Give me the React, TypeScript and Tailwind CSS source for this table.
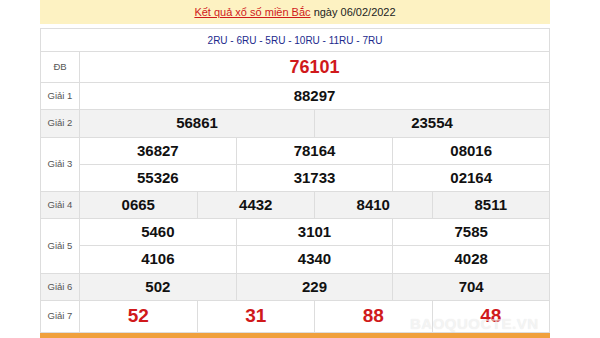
import React from "react";

const B = "border-[#dddddd]";

function Label({ text, gray }: { text: string; gray?: boolean }) {
  return (
    <div
      className={`w-[39px] shrink-0 flex items-center justify-center border-r border-b ${B} text-[9.5px] text-[#555555] ${gray ? "bg-[#f2f2f2]" : "bg-white"}`}
    >
      {text}
    </div>
  );
}

function NumRow({
  nums,
  h,
  gray,
  red,
  big,
}: {
  nums: string[];
  h: string;
  gray?: boolean;
  red?: boolean;
  big?: boolean;
}) {
  const cols =
    nums.length === 1
      ? "grid-cols-1"
      : nums.length === 2
      ? "grid-cols-2"
      : nums.length === 3
      ? "grid-cols-3"
      : "grid-cols-4";
  return (
    <div className={`grid ${cols} ${h} ${gray ? "bg-[#f2f2f2]" : "bg-white"}`}>
      {nums.map((n, i) => (
        <div
          key={i}
          className={`flex items-center justify-center border-r border-b ${B} font-bold ${
            red ? "text-[#d0191b]" : "text-[#111111]"
          } ${big ? "text-[19px]" : "text-[15px]"}`}
        >
          {n}
        </div>
      ))}
    </div>
  );
}

function Row({
  label,
  rows,
  gray,
  red,
  big,
}: {
  label: string;
  rows: { nums: string[]; h: string }[];
  gray?: boolean;
  red?: boolean;
  big?: boolean;
}) {
  return (
    <div className="flex">
      <Label text={label} gray={gray} />
      <div className="flex-1 flex flex-col">
        {rows.map((r, i) => (
          <NumRow key={i} nums={r.nums} h={r.h} gray={gray} red={red} big={big} />
        ))}
      </div>
    </div>
  );
}

export default function App() {
  return (
    <div
      className="w-[600px] h-[338px] bg-white overflow-hidden relative"
      style={{ fontFamily: '"Liberation Sans", Arial, sans-serif' }}
    >
      <div className="ml-[40px] w-[510px] flex flex-col">
        <div className="h-[24px] bg-[#fdf2c2] flex items-center justify-center text-[11px] text-[#222222]">
          <span className="text-[#d0191b] underline">Kết quả xổ số miền Bắc</span>
          <span>&nbsp;ngày 06/02/2022</span>
        </div>
        <div className="h-[4px]" />
        <div className={`border-l border-t ${B} w-[510px]`}>
          <div
            className={`h-[23px] flex items-center justify-center border-r border-b ${B} text-[10px] text-[#1c2a8c]`}
          >
            2RU - 6RU - 5RU - 10RU - 11RU - 7RU
          </div>
          <div className="flex">
            <Label text="ĐB" />
            <div
              className={`flex-1 h-[31px] flex items-center justify-center border-r border-b ${B} font-bold text-[18px] text-[#d0191b]`}
            >
              76101
            </div>
          </div>
          <Row label="Giải 1" rows={[{ nums: ["88297"], h: "h-[27px]" }]} />
          <Row label="Giải 2" gray rows={[{ nums: ["56861", "23554"], h: "h-[28px]" }]} />
          <Row
            label="Giải 3"
            rows={[
              { nums: ["36827", "78164", "08016"], h: "h-[27px]" },
              { nums: ["55326", "31733", "02164"], h: "h-[27px]" },
            ]}
          />
          <Row label="Giải 4" gray rows={[{ nums: ["0665", "4432", "8410", "8511"], h: "h-[27px]" }]} />
          <Row
            label="Giải 5"
            rows={[
              { nums: ["5460", "3101", "7585"], h: "h-[27px]" },
              { nums: ["4106", "4340", "4028"], h: "h-[28px]" },
            ]}
          />
          <Row label="Giải 6" gray rows={[{ nums: ["502", "229", "704"], h: "h-[27px]" }]} />
          <Row label="Giải 7" red big rows={[{ nums: ["52", "31", "88", "48"], h: "h-[32px]" }]} />
        </div>
        <div className="h-[8px] bg-[#f0a03c]" />
      </div>
      <div className="absolute left-[410px] top-[313px] text-[15px] font-bold tracking-[0.5px] text-white/60 [text-shadow:0_0_1px_rgba(0,0,0,0.12)]">
        BAOQUOCTE.VN
      </div>
    </div>
  );
}
